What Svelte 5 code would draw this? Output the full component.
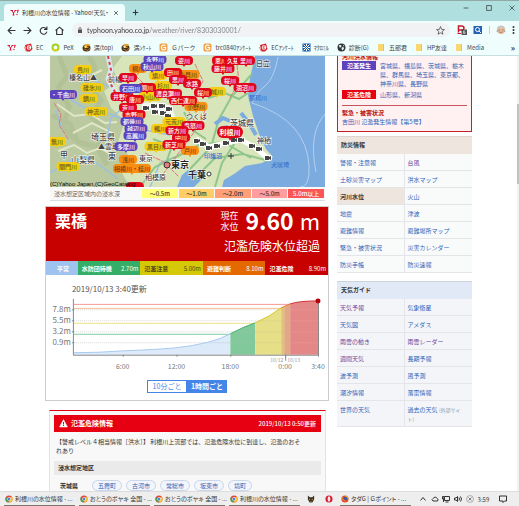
<script lang="ts">
  type Pin = { x: number; y: number; label: string; kind: string };

  const bookmarks = [
    { icon: "yahoo", label: "" },
    { icon: "ec", label: "EC" },
    { icon: "pex", label: "PeX" },
    { icon: "bee", label: "満(top)" },
    { icon: "bee", label: "満ﾝｹｰﾄ" },
    { icon: "g", label: "Ｇパーク" },
    { icon: "g", label: "trc0840ｱﾝｹｰﾄ" },
    { icon: "ec", label: "ECｱﾝｹｰﾄ" },
    { icon: "macro", label: "ﾏｸﾛﾐﾙ" },
    { icon: "globe", label: "診断(G)" },
    { icon: "folder", label: "五郎君" },
    { icon: "folder", label: "HP友達" },
    { icon: "folder", label: "Media" }
  ];

  const pins: Pin[] = [
    { x: 83, y: 70, label: "烏川", kind: "yellow" },
    { x: 92, y: 88, label: "碓氷川", kind: "yellow" },
    { x: 89, y: 99, label: "鏑川", kind: "yellow" },
    { x: 96, y: 112, label: "神流川", kind: "yellow" },
    { x: 57, y: 142, label: "無川", kind: "yellow" },
    { x: 68, y: 167, label: "間門川", kind: "yellow" },
    { x: 138, y: 69, label: "桐川", kind: "orange" },
    { x: 188, y: 75, label: "小貝川", kind: "orange" },
    { x: 158, y: 76, label: "旗川", kind: "yellow" },
    { x: 163, y: 86, label: "杉川", kind: "yellow" },
    { x: 150, y: 97, label: "小山川", kind: "yellow" },
    { x: 217, y: 92, label: "城川", kind: "yellow" },
    { x: 174, y: 122, label: "元荒川", kind: "yellow" },
    { x: 160, y: 129, label: "鴨川", kind: "yellow" },
    { x: 156, y: 147, label: "黒目川", kind: "yellow" },
    { x: 196, y: 107, label: "小野川", kind: "orange" },
    { x: 190, y: 151, label: "戸川", kind: "orange" },
    { x: 128, y: 160, label: "浅川", kind: "orange" },
    { x: 132, y: 169, label: "相模川・桂川", kind: "orange" },
    { x: 63, y: 95, label: "・千曲川", kind: "purple" },
    { x: 155, y: 60, label: "永野川", kind: "purple" },
    { x: 152, y: 67, label: "秋山川", kind: "purple" },
    { x: 184, y: 61, label: "姿川", kind: "red" },
    { x: 173, y: 73, label: "田川", kind: "red" },
    { x: 178, y: 80, label: "思川", kind: "red" },
    { x: 192, y: 84, label: "水路", kind: "red" },
    { x: 168, y: 94, label: "渡良瀬川", kind: "red" },
    { x: 183, y: 101, label: "西仁連川", kind: "red" },
    { x: 128, y: 78, label: "早川", kind: "red" },
    { x: 147, y: 88, label: "桐川", kind: "red" },
    { x: 122, y: 97, label: "井野川", kind: "red" },
    { x: 131, y: 89, label: "石田川", kind: "purple" },
    { x: 135, y: 100, label: "唐川", kind: "red" },
    { x: 128, y: 108, label: "荒川", kind: "red" },
    { x: 134, y: 115, label: "市野川", kind: "red" },
    { x: 132, y: 122, label: "都幾川", kind: "purple" },
    { x: 136, y: 129, label: "越辺川", kind: "purple" },
    { x: 135, y: 136, label: "高麗川", kind: "purple" },
    { x: 126, y: 147, label: "多摩川", kind: "purple" },
    { x: 221, y: 61, label: "恩川", kind: "red" },
    { x: 233, y: 61, label: "久慈", kind: "red" },
    { x: 246, y: 61, label: "里川", kind: "red" },
    { x: 223, y: 69, label: "藤井川", kind: "red" },
    { x: 230, y: 81, label: "桜川", kind: "red" },
    { x: 245, y: 88, label: "涸沼川", kind: "red" },
    { x: 203, y: 93, label: "桜川", kind: "red" },
    { x: 193, y: 126, label: "鬼怒川", kind: "red" },
    { x: 181, y: 138, label: "中川", kind: "red" },
    { x: 177, y: 131, label: "新方川", kind: "red" },
    { x: 174, y: 145, label: "新芝川", kind: "red" }
  ];

  const cameras = [
    [146, 108], [154, 106], [162, 106], [155, 112], [163, 113], [169, 109], [168, 116],
    [197, 141], [203, 144], [209, 148], [217, 146], [226, 143], [234, 140], [241, 140], [252, 146], [259, 149], [268, 158]
  ];

  const depths = [
    { label: "～0.5m", tone: "d1" },
    { label: "～1.0m", tone: "d2" },
    { label: "～2.0m", tone: "d3" },
    { label: "～5.0m", tone: "d4" },
    { label: "5.0m以上", tone: "d5" }
  ];

  const levels = [
    { name: "平常", value: "", tone: "normal" },
    { name: "水防団待機", value: "2.70m", tone: "standby" },
    { name: "氾濫注意", value: "5.00m", tone: "caution" },
    { name: "避難判断", value: "8.10m", tone: "evacuate" },
    { name: "氾濫危険", value: "8.90m", tone: "danger" }
  ];

  const yTicks = [
    { y: 310, label: "7.8m" },
    { y: 321, label: "5.5m" },
    { y: 332, label: "3.2m" },
    { y: 343, label: "0.9m" }
  ];

  const xTicks = [
    { x: 123, label: "6:00" },
    { x: 177, label: "12:00" },
    { x: 231, label: "18:00" },
    { x: 286, label: "0:00" },
    { x: 319, label: "3:40" }
  ];

  const towns = ["五霞町", "古河市", "常総市", "坂東市", "境町"];

  const disasterLinks = [
    "警報・注意報", "台風", "土砂災害マップ", "洪水マップ", "河川水位", "火山", "地震",
    "津波", "避難情報", "避難場所マップ", "緊急・被害状況", "災害カレンダー", "防災手帳", "防災速報"
  ];

  const guideLinks = [
    "天気予報", "気象衛星", "天気図", "アメダス", "雨雲の動き", "雨雲レーダー", "週間天気",
    "長期予報", "波予測", "風予測", "潮汐情報", "落雷情報", "世界の天気", "過去の天気"
  ];

  const visited = ["台風", "天気予報", "雨雲の動き", "雨雲レーダー", "週間天気"];

  const tasks = [
    "利根川の水位情報 - ...",
    "おとうのボヤキ 全国 - ...",
    "おとうのボヤキ 全国 - ...",
    "利根川の水位情報 - ..."
  ];

  let interval = $state("hour");

  function pinWidth(label: string) {
    return label.length * 5 + 8;
  }
</script>

{#snippet icon(name: string)}
  <svg class="icon" viewBox="0 0 18 18" aria-hidden="true">
    {#if name === "yahoo"}
      <path d="M1 5h5M3 5l4 5 4-5M9 5h4M7 10v4M5 14h4" fill="none" stroke="#e0103a" stroke-width="2" />
      <path d="M15 4l2 0-2 6z" fill="#e0103a" stroke="#e0103a" />
      <circle cx="14" cy="13" r="1.3" fill="#e0103a" />
    {:else if name === "ec"}
      <path d="M2 4l12-3 3 11-5 5H5z" fill="#d9202a" />
      <circle cx="10" cy="9" r="4.5" fill="#fff" />
      <path d="M8 7h4M8 9h3M8 11h4M8 7v4" stroke="#d9202a" fill="none" />
      <path d="M1 8l3 8" stroke="#e87a7a" stroke-width="2" />
    {:else if name === "pex"}
      <circle cx="9" cy="9" r="6" fill="none" stroke="#a6cf22" stroke-width="4" />
      <path d="M4 12a6 6 0 0 0 9 1" fill="none" stroke="#e8cf1c" stroke-width="4" />
    {:else if name === "bee"}
      <ellipse cx="9" cy="10" rx="8" ry="7" fill="#3e3420" />
      <path d="M3 7q6-8 13-4l-3 6q-6 3-10-2z" fill="#eaa62b" />
      <path d="M4 12l8 3 4-5" stroke="#ba6d20" stroke-width="2" fill="none" />
      <circle cx="7" cy="8" r="1.5" fill="#fff" /><circle cx="12" cy="7" r="1.5" fill="#2b2318" />
    {:else if name === "g"}
      <rect x="1" y="1" width="16" height="16" rx="3" fill="#f2a14a" />
      <path d="M13 5q-8-3-8 4t8 4V9H9" fill="none" stroke="#fff" stroke-width="2.4" />
    {:else if name === "macro"}
      <rect x="1" y="1" width="16" height="16" fill="#1b5ca8" />
      <path d="M3 3l12 12M15 3L3 15M9 2v4M9 12v4M2 9h4M12 9h4" stroke="#fff" stroke-width="2" />
    {:else if name === "globe"}
      <circle cx="9" cy="9" r="8" fill="#30363b" />
      <path d="M4 4q5-1 5 2t-4 3zM10 8q5 0 4 3l-3 4-2-3zM12 3l3 3-2 1z" fill="#e9f6f6" />
    {:else if name === "folder"}
      <path d="M2 2h12v14H2z" fill="#f9d873" />
      <path d="M12 2h2v14h-2z" fill="#edc154" />
    {:else if name === "chrome"}
      <circle cx="9" cy="9" r="8" fill="#e2473b" />
      <path d="M2 5l7 8-2 4a8 8 0 0 1-5-12z" fill="#3aa757" />
      <path d="M10 5h6a8 8 0 0 1-8 12l4-6z" fill="#fbc62d" />
      <circle cx="9" cy="9" r="4" fill="#fff" /><circle cx="9" cy="9" r="3" fill="#4a84e8" />
    {:else if name === "cat"}
      <path d="M2 1l4 4h6l4-4v9l-4 7H6l-4-7z" fill="#372f22" />
      <path d="M4 8l4 2-2 2zM14 8l-4 2 2 2zM7 15l2-2 2 2z" fill="#d9ad39" />
    {:else if name === "opera"}
      <circle cx="9" cy="9" r="8" fill="#e01b2e" />
      <ellipse cx="9" cy="9" rx="3" ry="6" fill="#eee" />
    {:else if name === "firefox"}
      <circle cx="9" cy="9" r="8" fill="#e3492d" />
      <path d="M8 1q8 0 9 8l-4-2z" fill="#f9b52d" />
      <circle cx="10" cy="8" r="4" fill="#3457a8" />
      <path d="M2 4q1 9 8 9" stroke="#f28c28" stroke-width="2" fill="none" />
    {/if}
  </svg>
{/snippet}

<div class="desktop">
  <header class="browser">
    <div class="tab-strip">
      <div class="tab">
        {@render icon("yahoo")}
        <span class="tab-title">利根川の水位情報 - Yahoo!天気・</span>
        <button type="button" aria-label="タブを閉じる">
          <svg class="icon tiny" viewBox="0 0 10 10"><path d="M2 2l6 6M8 2L2 8" /></svg>
        </button>
      </div>
      <button class="new-tab" type="button" aria-label="新しいタブ">
        <svg class="icon" viewBox="0 0 10 10"><path d="M5 2v6M2 5h6" /></svg>
      </button>
      <div class="window-controls">
        <button type="button" aria-label="最小化"><svg class="icon tiny" viewBox="0 0 10 10"><path d="M1 5h8" /></svg></button>
        <button type="button" aria-label="最大化"><svg class="icon tiny" viewBox="0 0 10 10"><path d="M1 1h8v8H1z" /></svg></button>
        <button type="button" aria-label="閉じる"><svg class="icon tiny" viewBox="0 0 10 10"><path d="M1 1l8 8M9 1L1 9" /></svg></button>
      </div>
    </div>

    <div class="toolbar">
      <button type="button" aria-label="戻る"><svg class="icon" viewBox="0 0 16 16"><path class="bold" d="M15 8H2M8 2L2 8l6 6" /></svg></button>
      <button type="button" aria-label="進む"><svg class="icon" viewBox="0 0 16 16"><path class="bold" d="M1 8h13M8 2l6 6-6 6" /></svg></button>
      <button type="button" aria-label="再読み込み"><svg class="icon" viewBox="0 0 16 16"><path class="bold" d="M13 5a6 6 0 1 0 1 5M14 1v5H9" /></svg></button>
      <button type="button" aria-label="ホーム"><svg class="icon" viewBox="0 0 16 16"><path class="bold" d="M1 8l7-6 7 6M3 7v8h10V7" /></svg></button>
      <div class="address">
        <svg class="icon tiny" viewBox="0 0 10 12"><path d="M1 5h8v7H1z" fill="#555" stroke="none" /><path d="M3 5V3a2 2 0 0 1 4 0v2" /></svg>
        <input type="text" aria-label="アドレス" value="typhoon.yahoo.co.jp/weather/river/8303030001/" />
        <svg class="icon" viewBox="0 0 16 16"><path d="M8 1l2 5 5 .4-4 3.2 1.3 5L8 12l-4.3 2.6L5 9.600 1 6.400 6 6z" /></svg>
      </div>
      <div class="extensions">
        <svg class="ext" viewBox="0 0 20 20"><path d="M3 15V2h6q5 0 5 4t-5 4H3M9 10l4 3" fill="none" stroke="#c51a2c" stroke-width="3" /><path d="M1 17h7" stroke="#c51a2c" stroke-width="2" /><rect x="9" y="9" width="11" height="11" fill="#555" /><path d="M16 12h-3v5h3v-3h-3" stroke="#fff" fill="none" /></svg>
        <svg class="ext" viewBox="0 0 20 20"><rect x="1" y="2" width="17" height="16" fill="#2463b8" /><circle cx="9" cy="9" r="4" fill="none" stroke="#fff" stroke-width="2" /><path d="M12 12l4 4" stroke="#fff" stroke-width="2" /></svg>
        <span class="rule"></span>
        <svg class="ext" viewBox="0 0 20 20"><circle cx="10" cy="10" r="8" fill="#e7b999" /><path d="M2 8q0-7 8-7t8 7l-4-2H6z" fill="#c8c8c4" /><path d="M5 10h3M12 10h3M7 14q3 2 6 0" stroke="#644" fill="none" /><circle cx="3" cy="12" r="2" fill="#aaa" /><circle cx="17" cy="12" r="2" fill="#aaa" /></svg>
        <svg class="ext dots" viewBox="0 0 6 20"><circle cx="3" cy="4" r="2" /><circle cx="3" cy="10" r="2" /><circle cx="3" cy="16" r="2" /></svg>
      </div>
    </div>

    <nav class="bookmarks" aria-label="ブックマーク">
      {#each bookmarks as mark}
        <a href="#bookmark" aria-label={mark.label || "Yahoo!"}>
          {@render icon(mark.icon)}
          {#if mark.label}<span>{mark.label}</span>{/if}
        </a>
      {/each}
      <button class="more" type="button">»</button>
    </nav>
  </header>

  <div class="viewport">
    <div class="page">
      <main>
        <section class="map-card">
          <svg class="map" viewBox="50 56 275 131" role="img" aria-label="河川水位マップ">
            <rect x="50" y="56" width="275" height="131" fill="#7cacdf" />
            <path d="M50 56H255L250 78 248 96 253 116 259 134 266 149 273 157 262 163 245 166 234 174 224 180 222 187H194L203 178 198 171 188 170 182 175 177 187H50z" fill="#d8e4ba" />
            <path d="M50 56H122L113 68 118 82 104 91 111 108 125 121 118 142 128 155 119 168 130 187H50z" fill="#bac99f" />
            <path d="M59 56l8 20-9 12 11 18-6 20 12 14M89 56l6 11-8 16 14 17-9 17 15 15-10 14 11 13M52 115l18 9 8 18 19 5 10 18" fill="none" stroke="#a9bb8d" stroke-width="5" opacity=".5" />
            <path d="M57 104l17 12 16-2 15 9 12-1M73 133l19-10 20 10M58 151l16-6 13 8 13-5 15 8M80 65l12 10 10-5" fill="none" stroke="#e0e6c8" stroke-width="2" />
            <path d="M50 94l20 5 13 8 22 5 15 6 15 10 15 3 20 4M78 73l11-2 8 11 15 5M56 110l6 19M125 106l-14 12-4 20M50 173l23-14 25 5 20 15M150 187l10-24 15-6" fill="none" stroke="#9ec0df" stroke-width="1.5" />
            <path d="M108 56l3 14-3 9 7 13 10 9" fill="none" stroke="#d7e8ee" stroke-width="5" />
            <path d="M108 56l3 14-3 9 7 13 10 9" fill="none" stroke="#dd3c43" stroke-width="2" stroke-dasharray="3 3" />
            <path d="M252 74l-20 22-13 23-8 28-21 22M208 98l17-5 14 6 9-6M140 187l15-20 21-10 23-12 24-3 28 16M193 180l22-22 28-4 26 7M215 187l7-24 12-19-5-17M184 112l10 19 12 8M153 139l19 7-6 17" fill="none" stroke="#8fc78b" stroke-width="2" />
            <path d="M195 64l8 17-8 16 10 13-5 15M136 76l15 15 33 13 14 23-23 31-17 23M54 103l7 11-2 11 10 15M237 65l2 16-9 17M145 153l19 9 15 15" fill="none" stroke="#df777a" stroke-width="1" stroke-dasharray="5 1" />
            <path d="M142 107l12-1 14 3 4 10" fill="none" stroke="#f2f4ee" stroke-width="8" />
            <path d="M196 139l13 8 16-4 16-3 12 6 15 12" fill="none" stroke="#fff" stroke-width="5" />
            <path d="M215 124l8-6 7 3M219 129l9-2M241 113l8 10 7 12" fill="none" stroke="#7cacdf" stroke-width="4" />
            <path d="M278 57q-4 22-13 29t-13 17q28 9 42 25t15 38-9 21M325 114q-17 19-9 58" fill="none" stroke="#b4d0ee" />
            <g class="place">
              <text x="69" y="80">榛名山▲</text>
              <text x="108" y="82">前橋</text>
              <text x="256" y="66">日立</text>
              <text x="186" y="119">つくば</text>
              <text x="257" y="143">神栖</text>
              <text x="98" y="149">▲雲取</text>
              <text x="139" y="161">東京</text>
              <text x="145" y="180">相模原</text>
            </g>
            <g class="place region">
              <text x="91" y="140">埼玉県</text>
              <text x="71" y="163">山梨県</text>
              <text x="230" y="126">茨城県</text>
              <text x="108" y="159">東</text>
              <text x="60" y="158">甲</text>
            </g>
            <g class="place city">
              <text x="171" y="168">東京</text>
              <text x="188" y="178">千葉</text>
            </g>
            <g class="place water">
              <text x="249" y="100">那珂川</text>
              <text x="204" y="158">印旛沼</text>
              <text x="271" y="167">犬吠埼</text>
            </g>
            <circle cx="167" cy="165" r="3" fill="#e47b80" stroke="#333" />
            <circle cx="209" cy="174" r="2" fill="#fff" stroke="#333" />
            <path d="M228 156h6M231 153v6" stroke="#333" />
            {#each cameras as [x, y]}
              <rect x={x - 4} y={y - 3} width="8" height="6" rx="2" fill="#fff" />
              <path d="M{x - 3} {y - 2}h4v1l2-1v4l-2-1v1h-4z" fill="#444" />
            {/each}
            {#each pins as pin}
              <g class="pin {pin.kind}">
                <rect x={pin.x - pinWidth(pin.label) / 2} y={pin.y - 5} width={pinWidth(pin.label)} height="9" rx="4" />
                <path d="M{pin.x - 2} {pin.y + 3}h4l-2 3z" />
                <text x={pin.x} y={pin.y + 2}>{pin.label}</text>
              </g>
            {/each}
            <g class="pin red current">
              <rect x="217" y="126" width="26" height="12" rx="6" />
              <path d="M228 137h4l-2 4z" />
              <text x="230" y="135">利根川</text>
            </g>
            <path d="M126 187q0-5 5-5h8q5 0 5 5z" fill="#e0071a" />
            <text class="copyright" x="50" y="186">(C)Yahoo Japan,(C)GeoCatalog</text>
          </svg>
          <div class="legend">
            <span class="legend-title">浸水想定区域内の浸水深</span>
            {#each depths as depth}
              <span class="depth {depth.tone}">{depth.label}</span>
            {/each}
          </div>
        </section>

        <section class="station">
          <div class="station-head">
            <h1>栗橋</h1>
            <div class="reading">
              <p class="current-level">
                <span class="caption">現在<br />水位</span>
                <strong>9.60</strong>
                <span class="unit">m</span>
              </p>
              <p class="status">氾濫危険水位超過</p>
            </div>
          </div>
          <div class="levels">
            {#each levels as level}
              <div class="level {level.tone}">
                <b>{level.name}</b>
                {#if level.value}<span>{level.value}</span>{/if}
              </div>
            {/each}
          </div>
          <svg class="chart" viewBox="46 275 283 101" role="img" aria-label="水位グラフ">
            <text class="updated" x="72" y="292">2019/10/13 3:40更新</text>
            <path d="M74 355V353Q100 353 125 351Q155 350 177 348Q213 344 231 334V355z" fill="#dceafa" />
            <path d="M231 355V334Q244 327 256 323V355z" fill="#81c99b" />
            <path d="M256 355V323L270 316 282 308V355z" fill="#e6df87" />
            <path d="M282 355V308L285 307V355z" fill="#e4c078" />
            <path d="M285 355V307L291 304V355z" fill="#dfa982" />
            <path d="M291 355V304Q300 301 319 301V355z" fill="#e48787" />
            {#each yTicks as tick}
              <path d="M74 {tick.y}H319" stroke="#bbb" stroke-dasharray="1 1" opacity=".6" />
              <path d="M72 {tick.y}h2" stroke="#888" />
              <text class="y-label" x="71" y={tick.y + 2}>{tick.label}</text>
            {/each}
            <path d="M74 304.5H291" stroke="#f59a9a" />
            <path d="M74 308.5H282" stroke="#f5bd8d" />
            <path d="M74 323.5H256" stroke="#e9e184" />
            <path d="M74 334.5H231" stroke="#7fcea1" />
            <path d="M74 353Q100 353 125 351Q155 350 177 348Q213 344 231 334" fill="none" stroke="#a8caef" />
            <path d="M231 334Q244 327 256 323" fill="none" stroke="#42ad6c" />
            <path d="M256 323L270 316 282 308" fill="none" stroke="#d6ca22" />
            <path d="M282 308L291 304" fill="none" stroke="#e47a2a" />
            <path d="M291 304Q300 301 319 301" fill="none" stroke="#cf2d31" />
            <path d="M73.5 299V355.5H319.5V301" fill="none" stroke="#888" />
            <path d="M286.5 355v6" stroke="#888" />
            <circle cx="319" cy="301" r="2.5" fill="#b80008" />
            <text class="day" x="284" y="362" text-anchor="end">10/12</text>
            <text class="day" x="288" y="362">10/13</text>
            {#each xTicks as tick}
              <path d="M{tick.x}.5 355v2" stroke="#888" />
              <text class="x-label" x={tick.x} y="369">{tick.label}</text>
            {/each}
          </svg>
          <div class="interval">
            <button type="button" class:is-active={interval === "ten"} onclick={() => (interval = "ten")}>10分ごと</button>
            <button type="button" class:is-active={interval === "hour"} onclick={() => (interval = "hour")}>1時間ごと</button>
          </div>
        </section>

        <section class="alert">
          <div class="alert-head">
            <svg class="icon" viewBox="0 0 18 18" aria-hidden="true"><path d="M9 1l8 15H1z" fill="#fff" stroke="#fff" /><path d="M9 6v5M9 12v2" stroke="#e60012" stroke-width="2" /></svg>
            <h2>氾濫危険情報</h2>
            <time>2019/10/13 0:50更新</time>
          </div>
          <p>【警戒レベル４相当情報［洪水］】 利根川上流部では、氾濫危険水位に到達し、氾濫のおそれあり</p>
          <h3>浸水想定地区</h3>
          <div class="towns">
            <b>茨城県</b>
            {#each towns as town}
              <a href="#town">{town}</a>
            {/each}
          </div>
        </section>
      </main>

      <aside>
        <section class="flood">
          <h2>河川洪水情報</h2>
          <dl>
            <dt class="occurred">氾濫発生</dt>
            <dd><a href="#area">宮城県</a>、<a href="#area">福島県</a>、<a href="#area">茨城県</a>、<a href="#area">栃木県</a>、<a href="#area">群馬県</a>、<a href="#area">埼玉県</a>、<a href="#area">東京都</a>、<a href="#area">神奈川県</a>、<a href="#area">長野県</a></dd>
            <dt>氾濫危険</dt>
            <dd><a href="#area">山形県</a>、<a href="#area">新潟県</a></dd>
          </dl>
          <div class="emergency">
            <h2>緊急・被害状況</h2>
            <a href="#report">吉田川 氾濫発生情報【第5号】</a>
          </div>
        </section>

        <nav class="link-box">
          <h2>防災情報</h2>
          <ul>
            {#each disasterLinks as link}
              <li class:is-current={link === "河川水位"}>
                {#if link === "河川水位"}
                  <span>{link}</span>
                {:else}
                  <a class:is-visited={visited.includes(link)} href="#disaster">{link}</a>
                {/if}
              </li>
            {/each}
          </ul>
        </nav>

        <nav class="link-box guide">
          <h2>天気ガイド</h2>
          <ul>
            {#each guideLinks as link}
              <li>
                <a class:is-visited={visited.includes(link)} href="#guide">{link}</a>
                {#if link === "過去の天気"}<small>(外部サイト)</small>{/if}
              </li>
            {/each}
          </ul>
        </nav>
      </aside>
    </div>
    <div class="scrollbar"><span></span></div>
  </div>

  <footer class="taskbar">
    {#each tasks as task}
      <button class="task" type="button">{@render icon("chrome")}<span>{task}</span></button>
    {/each}
    <button class="launcher" type="button" aria-label="GOM">{@render icon("cat")}</button>
    <button class="launcher" type="button" aria-label="Opera">{@render icon("opera")}</button>
    <button class="task" type="button">{@render icon("firefox")}<span>タダG | Ｇポイント - ...</span></button>
    <div class="tray">
      <svg class="icon" viewBox="0 0 16 16"><path class="bold" d="M3 11l5-6 5 6" /></svg>
      <svg class="icon" viewBox="0 0 16 16"><path class="bold" d="M4 12h9q3-4-1-5-2-5-6-2-1 2-2 2-4 2 0 5z" /></svg>
      <svg class="icon" viewBox="0 0 16 16"><path class="bold" d="M5 3h10v8H5zM7 14h6M1 3h3v5H1zM3 8v6" /></svg>
      <svg class="icon" viewBox="0 0 16 16"><path class="bold" d="M1 6h3l3-3v10l-3-3H1zM10 5q2 3 0 6M13 3q4 5 0 10" /></svg>
      <svg class="icon" viewBox="0 0 16 16"><circle cx="8" cy="8" r="7" fill="none" stroke="#777" /><path d="M5 5l6 6M11 5l-6 6" /></svg>
      <time>3:59</time>
      <svg class="icon notice" viewBox="0 0 16 16"><path class="bold" d="M1 2h14v10h-4l-3 3v-3H1z" /></svg>
    </div>
  </footer>
</div>

<style>
  :global(body) {
    margin: 0;
    background: #fff;
  }

  .desktop {
    display: flex;
    flex-direction: column;
    height: 100vh;
    overflow: hidden;
    font-family: "Noto Sans CJK JP", sans-serif;
    font-size: 6px;
    line-height: 9px;
    color: #333;
  }

  .desktop * {
    box-sizing: border-box;
  }

  h1,
  h2,
  h3,
  p,
  ul,
  dl,
  dd {
    margin: 0;
    padding: 0;
    font-size: inherit;
  }

  button {
    display: flex;
    align-items: center;
    padding: 0;
    border: 0;
    background: none;
    color: inherit;
    font: inherit;
    white-space: nowrap;
  }

  a {
    color: #2a64b8;
    text-decoration: none;
  }

  .icon {
    flex: none;
    width: 9px;
    height: 9px;
  }

  .icon.tiny {
    width: 6px;
    height: 6px;
  }

  .icon path:not([fill]):not([stroke]) {
    fill: none;
    stroke: #333;
    stroke-width: 1.2;
  }

  .icon path.bold:not([fill]):not([stroke]) {
    stroke-width: 2;
  }

  .browser {
    flex: none;
    background: #effdfc;
    border-bottom: 1px solid #c5dfe0;
  }

  .tab-strip {
    display: flex;
    align-items: center;
    height: 21px;
    padding: 0 4px;
    border-top: 1px solid #8fa9a6;
    background: #afdfde;
  }

  .tab {
    display: flex;
    align-items: center;
    align-self: flex-end;
    gap: 3px;
    width: 121px;
    height: 17px;
    padding: 0 6px;
    border-radius: 4px 4px 0 0;
    background: #effdfc;
  }

  .tab-title {
    flex: 1;
    font-feature-settings: "palt";
    white-space: nowrap;
  }

  .new-tab {
    align-self: flex-end;
    height: 17px;
    margin-left: 6px;
  }

  .window-controls {
    display: flex;
    gap: 17px;
    margin-left: auto;
    padding-bottom: 6px;
  }

  .toolbar {
    display: flex;
    align-items: center;
    gap: 7px;
    height: 18px;
    padding: 0 4px 0 7px;
  }

  .address {
    display: flex;
    flex: 1;
    align-items: center;
    gap: 4px;
    height: 14px;
    margin-left: 1px;
    padding: 0 5px;
    border-radius: 7px;
    background: #f0f2f4;
  }

  /* host name dark, path grey */
  .address input {
    flex: 1;
    min-width: 0;
    padding: 0;
    border: 0;
    background: linear-gradient(to right, #333 63px, #7d8286 63px);
    background-clip: text;
    color: transparent;
    font-family: Lato, sans-serif;
    font-size: 7px;
    outline: none;
  }

  .extensions {
    display: flex;
    align-items: center;
    gap: 6px;
  }

  .ext {
    width: 10px;
    height: 10px;
  }

  .ext.dots {
    width: 3px;
    fill: #333;
  }

  .rule {
    width: 1px;
    height: 8px;
    background: #c5d2d3;
  }

  .bookmarks {
    display: flex;
    align-items: center;
    gap: 8px;
    height: 16px;
    padding: 0 4px 0 7px;
    white-space: nowrap;
  }

  .bookmarks a {
    display: flex;
    align-items: center;
    gap: 3px;
    color: #444;
  }

  .more {
    margin-left: auto;
    font-size: 8px;
    font-weight: 700;
  }

  .viewport {
    display: flex;
    flex: 1;
    min-height: 0;
    overflow: hidden;
  }

  .page {
    display: grid;
    flex: 1;
    grid-template-columns: minmax(0, 284fr) minmax(0, 135fr);
    gap: 8px;
    align-items: start;
    padding: 0 45px;
  }

  .map-card {
    margin: 0 4px 5px 5px;
    border-bottom: 1px solid #ddd;
    background: #f8f8f8;
  }

  .map {
    display: block;
    width: 100%;
  }

  .place {
    font-size: 7px;
    font-weight: 500;
    fill: #444;
    stroke: #fff;
    stroke-width: 1;
    paint-order: stroke;
  }

  .place.region {
    font-size: 8px;
  }

  .place.city {
    font-size: 9px;
    font-weight: 700;
    fill: #222;
  }

  .place.water {
    font-size: 6px;
    fill: #3b70cc;
    stroke: none;
  }

  .pin text {
    font-size: 6px;
    font-weight: 500;
    text-anchor: middle;
    fill: #fff;
  }

  .pin.yellow {
    fill: #f6cd10;
  }

  .pin.yellow text {
    fill: #6d5a1c;
  }

  .pin.orange {
    fill: #f68f13;
  }

  .pin.orange text {
    fill: #73430b;
  }

  .pin.red {
    fill: #e0071a;
  }

  .pin.purple {
    fill: #5b43bd;
  }

  .pin.current text {
    font-size: 7px;
    font-weight: 700;
  }

  .copyright {
    font-family: "Liberation Sans", sans-serif;
    font-size: 6px;
    fill: #000;
  }

  .legend {
    display: grid;
    grid-template-columns: 88fr repeat(5, 36fr);
    gap: 1px;
    align-items: center;
    height: 13px;
    padding: 0 1px 0 4px;
    white-space: nowrap;
  }

  .legend-title {
    color: #666;
  }

  .depth {
    text-align: center;
    font-weight: 500;
  }

  .d1 {
    background: #ffff7a;
  }

  .d2 {
    background: #ffcc66;
  }

  .d3 {
    background: #ff9f78;
  }

  .d4 {
    background: #ff9d9f;
  }

  .d5 {
    background: #fb5558;
    color: #fff;
  }

  .station {
    padding-bottom: 7px;
    border: 1px solid #ccc;
    background: #fff;
  }

  .station-head {
    display: flex;
    justify-content: space-between;
    height: 54px;
    padding: 0 8px 0 9px;
    background: #c70000;
    color: #fff;
  }

  .station-head h1 {
    padding-top: 2px;
    font-size: 16px;
    line-height: 22px;
  }

  .reading {
    text-align: right;
  }

  .current-level {
    display: flex;
    align-items: center;
    justify-content: flex-end;
    height: 27px;
    line-height: 27px;
  }

  .current-level strong {
    margin: 0 6px 0 7px;
    font-size: 23px;
  }

  .caption {
    font-size: 9px;
    line-height: 11px;
  }

  .unit {
    font-size: 22px;
  }

  .status {
    margin-top: 3px;
    font-size: 12px;
    line-height: 18px;
  }

  .levels {
    display: grid;
    grid-template-columns: 32fr repeat(4, 63fr);
  }

  .level {
    display: flex;
    align-items: center;
    justify-content: space-between;
    height: 14px;
    padding: 0 2px 0 4px;
    color: #fff;
    white-space: nowrap;
  }

  .level.normal {
    justify-content: center;
    background: #9dc3ee;
  }

  .level.standby {
    background: #35ae68;
  }

  .level.caution {
    background: #d5c807;
    color: #4b4715;
  }

  .level.evacuate {
    background: #e46a00;
  }

  .level.danger {
    background: #c70000;
  }

  .chart {
    display: block;
    width: 100%;
  }

  .chart text {
    fill: #777;
  }

  .chart .updated {
    font-size: 8px;
    fill: #555;
  }

  .chart .y-label {
    font-size: 8px;
    text-anchor: end;
  }

  .chart .x-label {
    font-size: 7px;
    text-anchor: middle;
  }

  .chart .day {
    font-size: 5px;
    fill: #999;
  }

  .interval {
    display: flex;
    justify-content: center;
    margin-top: 4px;
  }

  .interval button {
    justify-content: center;
    width: 40px;
    height: 13px;
    border: 1px solid #4485e8;
    color: #4485e8;
    font-size: 7px;
  }

  .interval .is-active {
    background: #4485e8;
    color: #fff;
    font-weight: 700;
  }

  .alert {
    margin: 9px 3px 0 4px;
    padding: 4px 4px 0;
    border: 1px solid #e3e3e3;
    border-top: 1px solid #e60012;
    background: #f8f8f8;
  }

  .alert-head {
    display: flex;
    align-items: center;
    gap: 3px;
    height: 17px;
    padding: 0 5px;
    background: #e60012;
    color: #fff;
  }

  .alert-head h2 {
    font-size: 7px;
  }

  .alert-head time {
    margin-left: auto;
    font-weight: 500;
  }

  .alert p {
    padding: 5px 18px 6px 2px;
  }

  .alert h3 {
    height: 14px;
    padding-left: 4px;
    background: #eaeaea;
    line-height: 14px;
  }

  .towns {
    display: flex;
    gap: 4px;
    align-items: center;
    padding: 5px 6px;
  }

  .towns b {
    margin-right: 10px;
  }

  .towns a {
    padding: 0 5px;
    border: 1px solid #c9d5ec;
    border-radius: 6px;
    background: #f1f5fc;
  }

  .flood {
    margin-bottom: 4px;
    padding: 0 4px 5px;
    border: 1px solid #c51f2a;
    border-top: 0;
    background: #fff1f1;
  }

  .flood h2 {
    color: #b40f19;
  }

  /* the page is scrolled, so the first heading is cut by the viewport edge */
  .flood > h2 {
    height: 5px;
    line-height: 1px;
  }

  .flood dl {
    display: grid;
    grid-template-columns: 34px 1fr;
    gap: 2px 4px;
    align-items: start;
  }

  .flood dt {
    background: #e60012;
    color: #fff;
    font-weight: 700;
    text-align: center;
  }

  .flood dt.occurred {
    background: #5b43bd;
  }

  .flood dd {
    color: #2a64b8;
  }

  .emergency {
    margin-top: 6px;
    padding-top: 2px;
    border-top: 1px solid #c9535b;
  }

  .link-box {
    margin-bottom: 8px;
    border-top: 1px solid #ddd6d0;
    background: #f9fafa;
  }

  .link-box h2 {
    height: 17px;
    padding-left: 4px;
    background: #ede5de;
    line-height: 16px;
  }

  .link-box ul {
    display: grid;
    grid-template-columns: 1fr 1fr;
    list-style: none;
  }

  .link-box li {
    min-height: 17px;
    padding: 4px 3px 3px;
    border-bottom: 1px solid #e3e5e8;
  }

  .link-box li:nth-child(odd) {
    border-right: 1px solid #e3e5e8;
  }

  .link-box .is-current {
    background: #ede5de;
    font-weight: 700;
  }

  .link-box .is-visited {
    color: #6b4297;
  }

  .link-box small {
    color: #999;
    font-size: 5px;
    word-break: break-all;
  }

  .link-box.guide {
    border-color: #ccd3df;
    background: #f3f5f9;
  }

  .guide h2 {
    background: #e2e9f6;
  }

  .guide li:last-child {
    padding-right: 6px;
  }

  .scrollbar {
    width: 2px;
    padding-top: 48px;
    background: #f1f1f1;
  }

  .scrollbar span {
    display: block;
    height: 80px;
    background: #c1c1c1;
  }

  .taskbar {
    display: flex;
    flex: none;
    align-items: center;
    gap: 4px;
    height: 15px;
    padding: 0 12px 0 4px;
    border-top: 1px solid #ddd;
    background: #eee;
  }

  .task {
    flex: 0 0 71px;
    gap: 2px;
    min-width: 0;
    height: 14px;
    padding-left: 1px;
    border-bottom: 1px solid #7c7468;
  }

  .task span {
    font-feature-settings: "palt";
  }

  .task .icon,
  .launcher .icon {
    width: 8px;
    height: 8px;
  }

  .launcher {
    justify-content: center;
    width: 14px;
  }

  .tray {
    display: flex;
    flex: 1;
    align-items: center;
    justify-content: space-between;
    padding-left: 4px;
  }

  .tray .icon {
    width: 8px;
    height: 8px;
  }

  .tray .notice {
    margin-left: 6px;
  }
</style>
